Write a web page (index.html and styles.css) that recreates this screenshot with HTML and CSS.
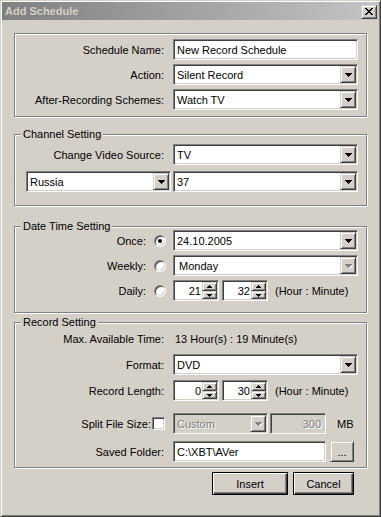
FILE: index.html
```html
<!DOCTYPE html>
<html lang="en">
<head>
    <meta charset="UTF-8">
    <meta name="viewport" content="width=device-width, initial-scale=1.0">
    <title>Add Schedule</title>
    <link rel="stylesheet" href="styles.css">
</head>
<body>
    <div class="window">
        <div class="titlebar">
            <span class="title">Add Schedule</span>
            <div class="close">
                <svg width="8" height="7" viewBox="0 0 8 7">
                    <path d="M0 0h2v1h1v1h2v-1h1v-1h2v1h-1v1h-1v1h-1v1h1v1h1v1h1v1h-2v-1h-1v-1h-2v1h-1v1h-2v-1h1v-1h1v-1h1v-1h-1v-1h-1v-1h-1z"/>
                </svg>
            </div>
        </div>

        <div class="dialog">
            <div class="group g-name">
                <div class="row">
                    <span class="label">Schedule Name:</span>
                    <div class="field w-wide">New Record Schedule</div>
                </div>
                <div class="row">
                    <span class="label">Action:</span>
                    <div class="field combo w-wide"><span>Silent Record</span><span class="drop"><svg width="7" height="4"><path d="M0 0h7v1h-1v1h-1v1h-1v1h-1v-1h-1v-1h-1v-1h-1z"/></svg></span></div>
                </div>
                <div class="row">
                    <span class="label">After-Recording Schemes:</span>
                    <div class="field combo w-wide"><span>Watch TV</span><span class="drop"><svg width="7" height="4"><path d="M0 0h7v1h-1v1h-1v1h-1v1h-1v-1h-1v-1h-1v-1h-1z"/></svg></span></div>
                </div>
            </div>

            <div class="group g-channel">
                <span class="legend">Channel Setting</span>
                <div class="row">
                    <span class="label">Change Video Source:</span>
                    <div class="field combo w-wide"><span>TV</span><span class="drop"><svg width="7" height="4"><path d="M0 0h7v1h-1v1h-1v1h-1v1h-1v-1h-1v-1h-1v-1h-1z"/></svg></span></div>
                </div>
                <div class="row pair">
                    <div class="field combo w-country"><span>Russia</span><span class="drop"><svg width="7" height="4"><path d="M0 0h7v1h-1v1h-1v1h-1v1h-1v-1h-1v-1h-1v-1h-1z"/></svg></span></div>
                    <div class="field combo w-wide"><span>37</span><span class="drop"><svg width="7" height="4"><path d="M0 0h7v1h-1v1h-1v1h-1v1h-1v-1h-1v-1h-1v-1h-1z"/></svg></span></div>
                </div>
            </div>

            <div class="group g-date">
                <span class="legend">Date Time Setting</span>
                <div class="row">
                    <span class="label opt">Once:<span class="radio checked"></span></span>
                    <div class="field combo w-wide"><span>24.10.2005</span><span class="drop"><svg width="7" height="4"><path d="M0 0h7v1h-1v1h-1v1h-1v1h-1v-1h-1v-1h-1v-1h-1z"/></svg></span></div>
                </div>
                <div class="row">
                    <span class="label opt">Weekly:<span class="radio"></span></span>
                    <div class="field combo w-wide"><span class="pad">Monday</span><span class="drop off"><svg width="7" height="4"><path d="M0 0h7v1h-1v1h-1v1h-1v1h-1v-1h-1v-1h-1v-1h-1z"/></svg></span></div>
                </div>
                <div class="row">
                    <span class="label opt">Daily:<span class="radio"></span></span>
                    <div class="field spin"><span class="num">21</span><span class="arrows"><span class="arrow"><svg width="5" height="3"><path d="M2 0h1v1h1v1h1v1h-5v-1h1v-1h1z"/></svg></span><span class="arrow"><svg width="5" height="3"><path d="M0 0h5v1h-1v1h-1v1h-1v-1h-1v-1h-1z"/></svg></span></span></div>
                    <div class="field spin"><span class="num">32</span><span class="arrows"><span class="arrow"><svg width="5" height="3"><path d="M2 0h1v1h1v1h1v1h-5v-1h1v-1h1z"/></svg></span><span class="arrow"><svg width="5" height="3"><path d="M0 0h5v1h-1v1h-1v1h-1v-1h-1v-1h-1z"/></svg></span></span></div>
                    <span class="hint">(Hour : Minute)</span>
                </div>
            </div>

            <div class="group g-record">
                <span class="legend">Record Setting</span>
                <div class="row">
                    <span class="label">Max. Available Time:</span>
                    <span class="value">13 Hour(s) : 19 Minute(s)</span>
                </div>
                <div class="row r-format">
                    <span class="label">Format:</span>
                    <div class="field combo w-wide"><span>DVD</span><span class="drop"><svg width="7" height="4"><path d="M0 0h7v1h-1v1h-1v1h-1v1h-1v-1h-1v-1h-1v-1h-1z"/></svg></span></div>
                </div>
                <div class="row r-length">
                    <span class="label">Record Length:</span>
                    <div class="field spin"><span class="num">0</span><span class="arrows"><span class="arrow"><svg width="5" height="3"><path d="M2 0h1v1h1v1h1v1h-5v-1h1v-1h1z"/></svg></span><span class="arrow"><svg width="5" height="3"><path d="M0 0h5v1h-1v1h-1v1h-1v-1h-1v-1h-1z"/></svg></span></span></div>
                    <div class="field spin"><span class="num">30</span><span class="arrows"><span class="arrow"><svg width="5" height="3"><path d="M2 0h1v1h1v1h1v1h-5v-1h1v-1h1z"/></svg></span><span class="arrow"><svg width="5" height="3"><path d="M0 0h5v1h-1v1h-1v1h-1v-1h-1v-1h-1z"/></svg></span></span></div>
                    <span class="hint">(Hour : Minute)</span>
                </div>
                <div class="row r-split">
                    <span class="label chk">Split File Size:<span class="checkbox"></span></span>
                    <div class="field combo disabled w-custom"><span>Custom</span><span class="drop off"><svg width="7" height="4"><path d="M0 0h7v1h-1v1h-1v1h-1v1h-1v-1h-1v-1h-1v-1h-1z"/></svg></span></div>
                    <div class="field disabled w-size"><span class="num">300</span></div>
                    <span class="unit">MB</span>
                </div>
                <div class="row r-folder">
                    <span class="label">Saved Folder:</span>
                    <div class="field w-folder">C:\XBT\AVer</div>
                    <div class="button browse">...</div>
                </div>
            </div>

            <div class="actions">
                <div class="button default w-insert">Insert</div>
                <div class="button default w-cancel">Cancel</div>
            </div>
        </div>
    </div>
</body>
</html>
```

FILE: styles.css
```css
* {
    box-sizing: border-box;
}

body {
    margin: 0;
    font-family: "Liberation Sans", Arial, sans-serif;
    font-size: 11px;
    color: #000;
    background-color: #d4d0c8;
}

.window {
    width: 381px;
    height: 517px;
    padding: 1px;
    background-color: #d4d0c8;
    border: 1px solid;
    border-color: #d4d0c8 #404040 #404040 #d4d0c8;
    box-shadow: inset 1px 1px 0 #fff, inset -1px -1px 0 #808080;
}

.titlebar {
    height: 18px;
    display: flex;
    align-items: center;
    justify-content: space-between;
    padding: 0 2px 0 3px;
    background: linear-gradient(to right, #808080, #c4c4c4);
}

.title {
    font-weight: bold;
    color: #d4d0c8;
}

.close,
.drop,
.arrow,
.button {
    display: flex;
    align-items: center;
    justify-content: center;
    background-color: #d4d0c8;
    border: 1px solid;
    border-color: #d4d0c8 #404040 #404040 #d4d0c8;
    box-shadow: inset 1px 1px 0 #fff, inset -1px -1px 0 #808080;
}

.close {
    width: 16px;
    height: 14px;
    margin-top: 1px;
}

.dialog {
    padding: 13px 12px 0 12px;
}

.group {
    position: relative;
    border: 1px solid #808080;
    box-shadow: 1px 1px 0 #fff, inset 1px 1px 0 #fff;
    padding: 5px 8px 6px 0;
}

.g-channel {
    margin-top: 17px;
    padding: 9px 8px 13px 0;
}

.g-date {
    margin-top: 20px;
    padding: 3px 8px 11px 0;
}

.g-record {
    margin-top: 9px;
    padding: 5px 8px 5px 0;
}

.legend {
    position: absolute;
    top: -7px;
    left: 6px;
    padding: 0 2px;
    line-height: 13px;
    background-color: #d4d0c8;
}

.row {
    display: flex;
    align-items: center;
    height: 21px;
}

.row + .row {
    margin-top: 4px;
}

.g-channel .row + .row {
    margin-top: 6px;
}

.g-record .r-format,
.g-record .r-length {
    margin-top: 5px;
}

.g-record .r-split {
    margin-top: 12px;
}

.g-record .r-folder {
    margin-top: 7px;
}

.label {
    width: 158px;
    flex-shrink: 0;
    padding-right: 9px;
    text-align: right;
    white-space: nowrap;
}

.label.opt,
.label.chk {
    display: flex;
    align-items: center;
    justify-content: flex-end;
}

.label.opt {
    padding-right: 7px;
}

.label.chk {
    padding-right: 8px;
}

.pair {
    padding-left: 11px;
}

.field {
    height: 21px;
    display: flex;
    align-items: center;
    padding: 0 1px 0 3px;
    background-color: #fff;
    border: 1px solid;
    border-color: #808080 #fff #fff #808080;
    box-shadow: inset 1px 1px 0 #404040, inset -1px -1px 0 #d4d0c8;
    white-space: nowrap;
}

.field .pad {
    padding-left: 2px;
}

.drop {
    width: 16px;
    height: 17px;
    margin-left: auto;
}

.drop.off svg,
.drop.off path {
    fill: #808080;
}

.drop.off svg {
    filter: drop-shadow(1px 1px 0 #fff);
}

.w-wide {
    width: 185px;
}

.w-country {
    width: 145px;
    margin-right: 2px;
}

.w-custom {
    width: 95px;
    margin-right: 2px;
}

.w-size {
    width: 56px;
    padding-right: 4px;
}

.w-folder {
    width: 153px;
}

.spin {
    width: 46px;
    margin-right: 3px;
}

.spin .num,
.w-size .num {
    margin-left: auto;
}

.arrows {
    display: flex;
    flex-direction: column;
    width: 15px;
    height: 17px;
    margin-left: 1px;
}

.arrow {
    height: 9px;
}

.arrow + .arrow {
    height: 8px;
}

.hint {
    margin-left: 4px;
}

.value {
    padding-left: 2px;
}

.unit {
    margin-left: 11px;
}

.disabled {
    background-color: #d4d0c8;
    color: #808080;
    text-shadow: 1px 1px 0 #fff;
}

.radio {
    width: 12px;
    height: 12px;
    margin-left: 8px;
    border-radius: 50%;
    background-color: #fff;
    border: 1px solid;
    border-color: #808080 #fff #fff #808080;
    box-shadow: inset 1px 1px 0 #404040, inset -1px -1px 0 #d4d0c8;
    display: flex;
    align-items: center;
    justify-content: center;
}

.radio.checked::after {
    content: "";
    width: 4px;
    height: 4px;
    border-radius: 50%;
    background-color: #000;
}

.checkbox {
    width: 13px;
    height: 13px;
    margin-left: 1px;
    background-color: #fff;
    border: 1px solid;
    border-color: #808080 #fff #fff #808080;
    box-shadow: inset 1px 1px 0 #404040, inset -1px -1px 0 #d4d0c8;
}

.browse {
    width: 24px;
    height: 21px;
    margin-left: 4px;
}

.actions {
    display: flex;
    justify-content: flex-end;
    gap: 5px;
    margin-top: 4px;
    padding-right: 13px;
}

.button.default {
    height: 23px;
    border: 1px solid #000;
    box-shadow: inset 1px 1px 0 #fff, inset -1px -1px 0 #404040, inset -2px -2px 0 #808080;
}

.w-insert {
    width: 76px;
}

.w-cancel {
    width: 61px;
}
```
